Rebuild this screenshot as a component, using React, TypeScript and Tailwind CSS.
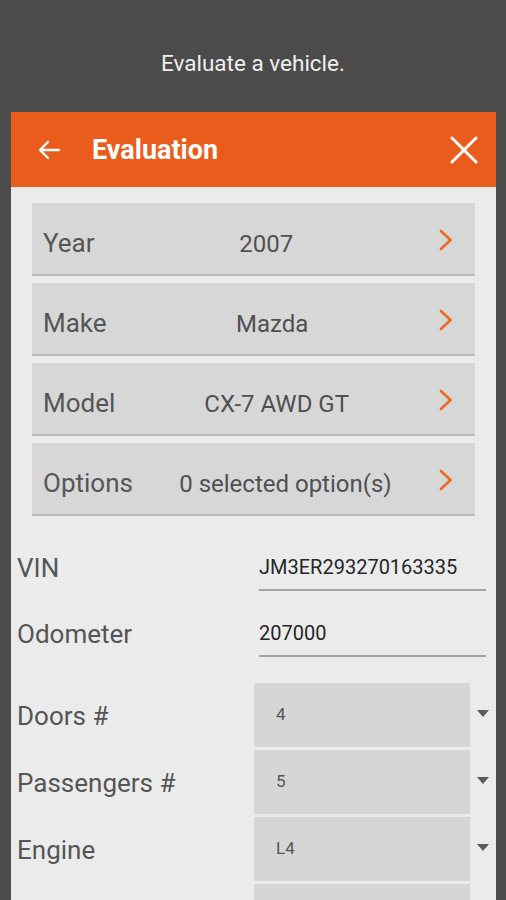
import React from "react";

const font = { fontFamily: "Roboto, 'Noto Sans', Arial, sans-serif" };

function Chevron() {
  return (
    <svg width="16" height="24" viewBox="0 0 16 24" className="shrink-0 mt-[3px]">
      <path d="M3 3 L12.5 12 L3 21" fill="none" stroke="#ec6a24" strokeWidth="2.8" strokeLinecap="round" strokeLinejoin="round" />
    </svg>
  );
}

function Card({ label, value }: { label: string; value: string }) {
  return (
    <div className="h-[73px] bg-[#d7d7d7] border-b-[2px] border-[#bcbcbc] flex items-center pl-[11px] pr-[21px] mb-[7px]">
      <span className="text-[26px] text-[#555555] mt-[10px]">{label}</span>
      <span className="flex-1 text-center text-[24px] text-[#505050] mt-[10px]">{value}</span>
      <Chevron />
    </div>
  );
}

function InputRow({ label, value }: { label: string; value: string }) {
  return (
    <div className="h-[66px] flex items-center">
      <span className="flex-1 pl-[6px] text-[26px] text-[#555555]">{label}</span>
      <div className="w-[227px] mr-[10px] h-[46px] border-b-[2px] border-[#a3a3a3] flex items-center">
        <span className="text-[20px] text-[#262626]">{value}</span>
      </div>
    </div>
  );
}

function SelectRow({ label, value }: { label: string; value: string }) {
  return (
    <div className="h-[64px] flex items-center mb-[3px]">
      <span className="flex-1 pl-[6px] text-[26px] text-[#555555] mt-[2px]">{label}</span>
      <div className="w-[216px] h-full bg-[#d6d6d6] flex items-center pl-[22px]">
        <span className="text-[17px] text-[#555555]">{value}</span>
      </div>
      <div className="w-[26px] flex items-center justify-center pb-[4px]">
        <svg width="12" height="7" viewBox="0 0 12 7">
          <path d="M0 0 L12 0 L6 7 Z" fill="#5a5a5a" />
        </svg>
      </div>
    </div>
  );
}

export default function App() {
  return (
    <div className="w-[506px] h-[900px] bg-[#4b4b4b] overflow-hidden flex flex-col" style={font}>
      <div className="h-[112px] flex items-center justify-center pt-[16px] shrink-0">
        <span className="text-[22.5px] text-[#eeeeee]">Evaluate a vehicle.</span>
      </div>
      <div className="ml-[11px] mr-[10px] flex-1 bg-[#ebebeb] flex flex-col">
        <div className="h-[75px] bg-[#e95c1b] flex items-center shrink-0">
          <div className="w-[81px] flex items-center pl-[26px]">
            <svg width="24" height="22" viewBox="0 0 24 22">
              <path d="M22 11 H3 M11 3 L3 11 L11 19" fill="none" stroke="#ffffff" strokeWidth="2.4" strokeLinecap="round" strokeLinejoin="round" />
            </svg>
          </div>
          <span className="flex-1 text-[27px] font-bold text-white mt-[2px]">Evaluation</span>
          <div className="pr-[18px] flex items-center">
            <svg width="28" height="28" viewBox="0 0 28 28">
              <path d="M2 2 L26 26 M26 2 L2 26" fill="none" stroke="#ffffff" strokeWidth="3" strokeLinecap="round" />
            </svg>
          </div>
        </div>
        <div className="pt-[16px] px-[21px]">
          <Card label="Year" value="2007" />
          <Card label="Make" value="Mazda" />
          <Card label="Model" value="CX-7 AWD GT" />
          <Card label="Options" value="0 selected option(s)" />
        </div>
        <div className="mt-[12px]">
          <InputRow label="VIN" value="JM3ER293270163335" />
          <InputRow label="Odometer" value="207000" />
        </div>
        <div className="mt-[16px]">
          <SelectRow label="Doors #" value="4" />
          <SelectRow label="Passengers #" value="5" />
          <SelectRow label="Engine" value="L4" />
          <SelectRow label="" value="" />
        </div>
      </div>
    </div>
  );
}
